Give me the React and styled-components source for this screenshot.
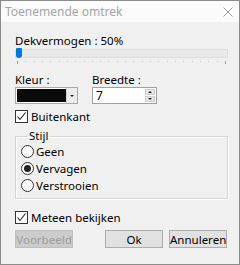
import React from "react";
import styled, { createGlobalStyle } from "styled-components";

const Global = createGlobalStyle`
  html, body {
    margin: 0;
    padding: 0;
    background: #f0f0f0;
  }
  * {
    box-sizing: border-box;
  }
`;

const Window = styled.div`
  width: 240px;
  height: 265px;
  border: 1px solid #8c8c8c;
  background: #f0f0f0;
  display: flex;
  flex-direction: column;
  font-family: "Noto Sans", "Open Sans", sans-serif;
  font-size: 11.5px;
  color: #000;
  overflow: hidden;
`;

const TitleBar = styled.div`
  height: 21px;
  flex: none;
  background: #fbfbfb;
  display: flex;
  align-items: center;
  justify-content: space-between;
  padding: 0 6px 0 4px;
`;

const TitleText = styled.span`
  color: #a6a6a6;
  font-size: 12px;
`;

const Body = styled.div`
  flex: 1;
  padding: 11px 11px 0 14px;
  display: flex;
  flex-direction: column;
`;

const Label = styled.div`
  line-height: 15px;
  height: 15px;
  white-space: nowrap;
`;

const SliderBox = styled.div`
  position: relative;
  height: 16px;
`;

const Track = styled.div`
  position: absolute;
  left: 0;
  right: 0;
  top: 1px;
  height: 9px;
  background: #e9e9e9;
  border: 1px solid #dcdcdc;
`;

const Thumb = styled.div`
  position: absolute;
  left: 1px;
  top: 0;
  width: 6px;
  height: 10px;
  background: #0078d7;
  border-radius: 1px 1px 3px 3px;
`;

const Ticks = styled.div`
  position: absolute;
  left: 2px;
  right: 2px;
  top: 13px;
  display: flex;
  justify-content: space-between;
`;

const Tick = styled.span`
  width: 1px;
  height: ${({ big }) => (big ? 3 : 1)}px;
  background: ${({ big }) => (big ? "#9a9a9a" : "#c4c4c4")};
`;

const FieldRow = styled.div`
  display: flex;
  gap: 14px;
  margin-top: 8px;
`;

const Field = styled.div`
  display: flex;
  flex-direction: column;
`;

const Combo = styled.div`
  width: 63px;
  height: 17px;
  border: 1px solid #a9a9a9;
  display: flex;
  background: #fff;
`;

const Swatch = styled.div`
  flex: 1;
  background: #0a0a0a;
  border: 1px solid #fff;
  border-right: none;
`;

const DropBtn = styled.div`
  width: 11px;
  background: #ececec;
  border-left: 1px solid #d0d0d0;
  display: flex;
  align-items: center;
  justify-content: center;
`;

const Spin = styled.div`
  width: 65px;
  height: 17px;
  border: 1px solid #a0a0a0;
  background: #fff;
  display: flex;
`;

const SpinText = styled.div`
  flex: 1;
  padding-left: 3px;
  line-height: 15px;
  font-size: 12px;
`;

const SpinBtns = styled.div`
  width: 10px;
  margin: 1px 1px 1px 0;
  display: flex;
  flex-direction: column;
  gap: 1px;
`;

const SpinBtn = styled.div`
  flex: 1;
  background: #e6e6e6;
  border: 1px solid #cfcfcf;
  display: flex;
  align-items: center;
  justify-content: center;
`;

const Arrow = styled.span`
  width: 0;
  height: 0;
  border-left: 2px solid transparent;
  border-right: 2px solid transparent;
  ${({ up }) =>
    up ? "border-bottom: 2px solid #222;" : "border-top: 2px solid #222;"}
`;

const CheckRow = styled.label`
  display: flex;
  align-items: center;
  gap: 3px;
  height: 13px;
  margin-top: ${({ mt }) => mt}px;
  white-space: nowrap;
`;

const Box = styled.span`
  width: 13px;
  height: 13px;
  border: 1px solid #333;
  background: #fff;
  display: flex;
  align-items: center;
  justify-content: center;
  flex: none;
`;

const Group = styled.fieldset`
  margin: 7px 0 0 0;
  padding: 3px 0 6px 5px;
  border: 1px solid #d5d5d5;
  box-shadow: inset 1px 1px 0 #fff, 1px 1px 0 #fff;
  min-width: 0;
  display: flex;
  flex-direction: column;
  gap: 4px;
`;

const Legend = styled.legend`
  padding: 0 2px;
  margin-left: 6px;
  line-height: 12px;
`;

const RadioRow = styled.label`
  display: flex;
  align-items: center;
  gap: 2px;
  height: 13px;
`;

const Circle = styled.span`
  width: 13px;
  height: 13px;
  border-radius: 50%;
  border: 1px solid #333;
  background: #fff;
  display: flex;
  align-items: center;
  justify-content: center;
  flex: none;
  &::after {
    content: "";
    display: ${({ on }) => (on ? "block" : "none")};
    width: 7px;
    height: 7px;
    border-radius: 50%;
    background: #222;
  }
`;

const Buttons = styled.div`
  display: flex;
  margin-top: 6px;
  gap: 6px;
  padding-right: 1px;
`;

const Button = styled.button`
  width: 58px;
  height: 18px;
  padding: 0;
  font-family: inherit;
  font-size: 11.5px;
  background: ${({ disabled }) => (disabled ? "#cccccc" : "#e1e1e1")};
  border: 1px solid ${({ disabled }) => (disabled ? "#bfbfbf" : "#adadad")};
  color: ${({ disabled }) => (disabled ? "#9d9d9d" : "#000")};
  margin-right: ${({ gapAfter }) => gapAfter || 0}px;
`;

const Check = () => (
  <svg width="11" height="11" viewBox="0 0 11 11">
    <path d="M1.5 5.5 L4 8.5 L9.5 1.5" fill="none" stroke="#222" strokeWidth="1.1" />
  </svg>
);

export default function App() {
  const ticks = Array.from({ length: 26 }, (_, i) => i);
  return (
    <>
      <Global />
      <Window>
        <TitleBar>
          <TitleText>Toenemende omtrek</TitleText>
          <svg width="10" height="10" viewBox="0 0 10 10">
            <path d="M0.5 0.5 L9.5 9.5 M9.5 0.5 L0.5 9.5" stroke="#9a9a9a" strokeWidth="1" />
          </svg>
        </TitleBar>
        <Body>
          <Label>Dekvermogen : 50%</Label>
          <SliderBox>
            <Track />
            <Thumb />
            <Ticks>
              {ticks.map((t) => (
                <Tick key={t} big={t === 0 || t === ticks.length - 1} />
              ))}
            </Ticks>
          </SliderBox>
          <FieldRow>
            <Field>
              <Label>Kleur :</Label>
              <Combo>
                <Swatch />
                <DropBtn>
                  <Arrow />
                </DropBtn>
              </Combo>
            </Field>
            <Field>
              <Label>Breedte :</Label>
              <Spin>
                <SpinText>7</SpinText>
                <SpinBtns>
                  <SpinBtn>
                    <Arrow up />
                  </SpinBtn>
                  <SpinBtn>
                    <Arrow />
                  </SpinBtn>
                </SpinBtns>
              </Spin>
            </Field>
          </FieldRow>
          <CheckRow mt={6}>
            <Box>
              <Check />
            </Box>
            Buitenkant
          </CheckRow>
          <Group>
            <Legend>Stijl</Legend>
            <RadioRow>
              <Circle />
              Geen
            </RadioRow>
            <RadioRow>
              <Circle on />
              Vervagen
            </RadioRow>
            <RadioRow>
              <Circle />
              Verstrooien
            </RadioRow>
          </Group>
          <CheckRow mt={12}>
            <Box>
              <Check />
            </Box>
            Meteen bekijken
          </CheckRow>
          <Buttons>
            <Button disabled gapAfter={26}>
              Voorbeeld
            </Button>
            <Button>Ok</Button>
            <Button>Annuleren</Button>
          </Buttons>
        </Body>
      </Window>
    </>
  );
}
